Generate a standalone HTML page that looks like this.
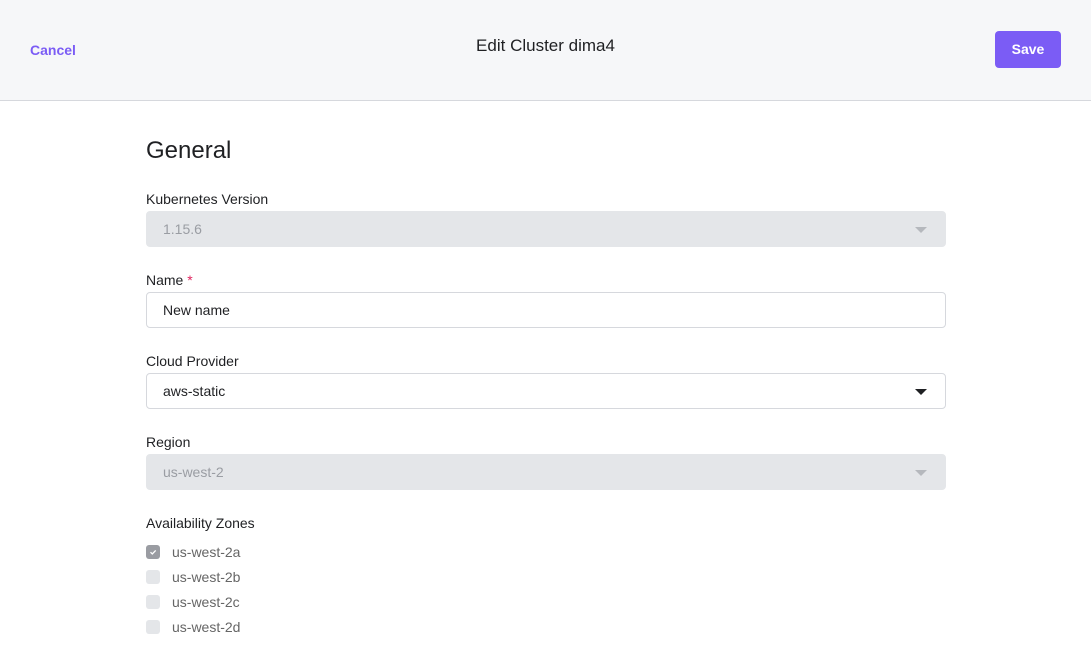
<!DOCTYPE html>
<html><head><style>
*{box-sizing:border-box;margin:0;padding:0}
body{width:1091px;height:654px;overflow:hidden;background:#fff;font-family:"Liberation Sans",sans-serif;color:#1f2023;position:relative}
.hdr{position:absolute;left:0;top:0;width:1091px;height:101px;background:#f6f7f9;border-bottom:1px solid #d6d8dd}
.cancel{position:absolute;left:30px;top:42px;font-size:14px;color:#7b5cf5;font-weight:bold}
.title{position:absolute;left:0;width:1091px;top:36px;text-align:center;font-size:17px}
.save{position:absolute;left:995px;top:31px;width:66px;height:37px;background:#7b5cf5;border-radius:4px;color:#fff;font-weight:bold;font-size:14px;text-align:center;line-height:37px}
h1{position:absolute;left:146px;top:137px;font-size:24px;font-weight:normal}
.lbl{position:absolute;left:146px;font-size:14px}
.in{position:absolute;left:146px;width:800px;height:36px;border:1px solid #d6d8dd;border-radius:4px;font-size:14px;padding-left:16px;line-height:34px}
.dis{background:#e4e6e9;border-color:#e4e6e9;color:#9a9da3}
.car{position:absolute;right:18px;top:15px;width:0;height:0;border-left:6px solid transparent;border-right:6px solid transparent;border-top:6px solid #1f2023}
.dis .car{border-top-color:#b5b8bd}
.cb{position:absolute;left:146px;width:14px;height:14px;border-radius:3px;background:#e4e6e9}
.cbl{position:absolute;left:172px;font-size:14px;color:#666}
</style></head><body>
<div class="hdr"><div class="cancel">Cancel</div><div class="title">Edit Cluster dima4</div><div class="save">Save</div></div>
<h1>General</h1>
<div class="lbl" style="top:191px">Kubernetes Version</div>
<div class="in dis" style="top:211px">1.15.6<div class="car"></div></div>
<div class="lbl" style="top:272px">Name <span style="color:#e0245e">*</span></div>
<div class="in" style="top:292px">New name</div>
<div class="lbl" style="top:353px">Cloud Provider</div>
<div class="in" style="top:373px">aws-static<div class="car"></div></div>
<div class="lbl" style="top:434px">Region</div>
<div class="in dis" style="top:454px">us-west-2<div class="car"></div></div>
<div class="lbl" style="top:515px">Availability Zones</div>
<div class="cb" style="top:545px;background:#9a9ca2"><svg width="14" height="14" viewBox="0 0 14 14"><path d="M4.5 7.2l1.8 1.8 3.4-3.6" stroke="#fff" stroke-width="1.3" fill="none"/></svg></div>
<div class="cbl" style="top:544px">us-west-2a</div>
<div class="cb" style="top:570px"></div><div class="cbl" style="top:569px">us-west-2b</div>
<div class="cb" style="top:595px"></div><div class="cbl" style="top:594px">us-west-2c</div>
<div class="cb" style="top:620px"></div><div class="cbl" style="top:619px">us-west-2d</div>
</body></html>
